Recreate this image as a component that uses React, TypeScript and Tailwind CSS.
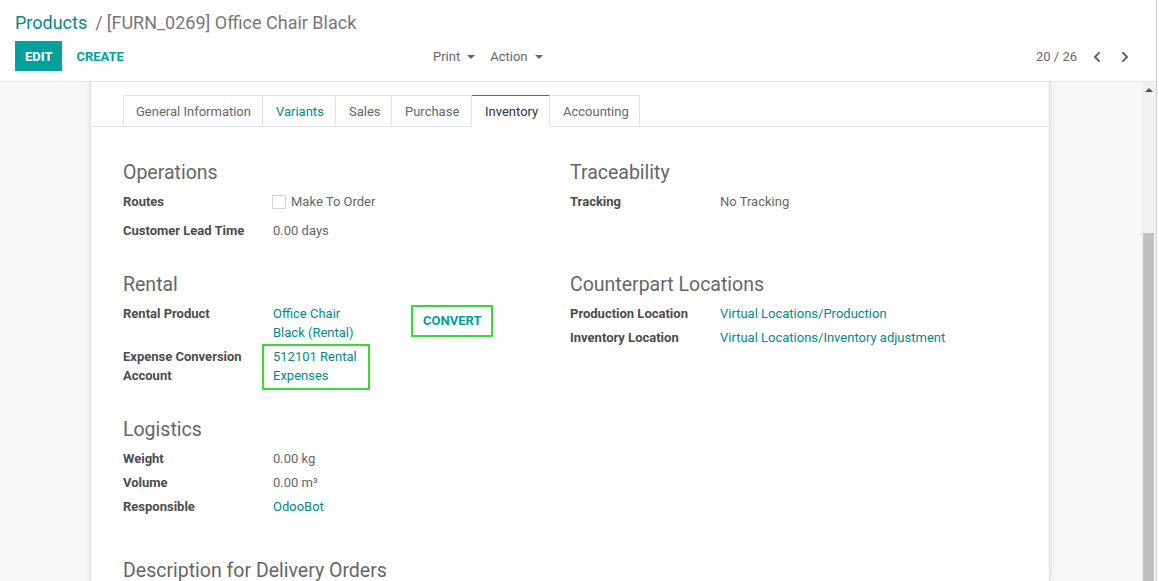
import React from "react";
import { FaChevronLeft, FaChevronRight } from "react-icons/fa";

const Caret = () => (
  <span className="inline-block ml-[7px] w-0 h-0 border-solid border-t-[4px] border-x-[4px] border-b-0 border-x-transparent border-t-[#666]" />
);

const Heading = ({ children, className = "" }: { children: React.ReactNode; className?: string }) => (
  <h2 className={`text-[19.5px] leading-[24px] pt-[1px] -mb-[1px] text-[#666] font-normal ${className}`}>{children}</h2>
);

const Row = ({ label, children, className = "" }: { label: React.ReactNode; children: React.ReactNode; className?: string }) => (
  <div className={`flex ${className}`}>
    <div className="w-[150px] shrink-0 font-bold text-[#4c4c4c] leading-[19px]">{label}</div>
    <div className="leading-[19px] text-[#666]">{children}</div>
  </div>
);

const tabs = [
  { name: "General Information", w: "w-[140px]" },
  { name: "Variants", w: "w-[73px]" },
  { name: "Sales", w: "w-[56px]" },
  { name: "Purchase", w: "w-[80px]" },
  { name: "Inventory", w: "w-[78px]" },
  { name: "Accounting", w: "w-[90px]" },
];

export default function App() {
  return (
    <div className="w-[1159px] h-[581px] overflow-hidden flex bg-white font-[Roboto,sans-serif] text-[13px]">
      <div className="w-[1156px] flex flex-col">
        {/* Header */}
        <div className="h-[82px] border-b border-[#dee2e6] bg-white shrink-0">
          <div className="pl-[15px] pt-[11px] flex items-center text-[18px] leading-[24px]">
            <span className="text-[#018a87]">Products</span>
            <span className="ml-[8px] text-[#777]">/</span>
            <span className="ml-[4px] text-[#777]">[FURN_0269] Office Chair Black</span>
          </div>
          <div className="mt-[6px] flex items-center h-[30px]">
            <div className="w-[433px] pl-[15px] flex items-center">
              <div className="h-[30px] px-[10px] pt-px bg-[#00A09D] text-white font-bold flex items-center">EDIT</div>
              <div className="ml-[4px] px-[10px] pt-px text-[#00A09D] font-bold">CREATE</div>
            </div>
            <div className="flex items-center pt-px text-[#666]">
              <span>Print</span>
              <Caret />
              <span className="ml-[15px]">Action</span>
              <Caret />
            </div>
            <div className="ml-auto pr-[25px] pt-px flex items-center text-[#666]">
              <span>20 / 26</span>
              <FaChevronLeft size={12} className="ml-[14px] text-[#5f5f5f]" />
              <FaChevronRight size={12} className="ml-[16px] text-[#5f5f5f]" />
            </div>
          </div>
        </div>

        {/* Body */}
        <div className="flex-1 flex min-h-0">
          <div className="w-[1141px] bg-[#f8f8f8] overflow-hidden">
            <div className="ml-[90px] w-[960px] h-full bg-white border-x border-[#dcdcdc] shadow-[0_0_8px_rgba(0,0,0,0.10)] px-[32px] pt-[13px]">
              {/* Tabs */}
              <div className="-mx-[32px] px-[32px] border-b border-[#dee2e6] flex h-[32px]">
                {tabs.map((t, i) => {
                  const active = t.name === "Inventory";
                  return (
                    <div
                      key={t.name}
                      className={`${t.w} h-[32px] -mb-px pt-px flex items-center border-y border-r ${i === 0 ? "border-l pl-[12px]" : "pl-[13px]"} ${
                        active
                          ? "border-t-[#7c5975] border-b-white border-r-[#dee2e6] bg-white text-[#333]"
                          : "border-[#dee2e6] bg-white " + (t.name === "Variants" ? "text-[#018a87]" : "text-[#666]")
                      }`}
                    >
                      {t.name}
                    </div>
                  );
                })}
              </div>

              {/* Content */}
              <div className="flex mt-[33px]">
                {/* Left column */}
                <div className="w-[447px]">
                  <Heading>Operations</Heading>
                  <Row label="Routes" className="pt-[8px] pb-[2px]">
                    <span className="flex items-center">
                      <span className="inline-block w-[14px] h-[14px] border border-[#d4d4d4] bg-white -ml-px" />
                      <span className="ml-[5px]">Make To Order</span>
                    </span>
                  </Row>
                  <Row label="Customer Lead Time" className="pt-[8px] pb-[2px]">
                    0.00 days
                  </Row>

                  <Heading className="mt-[30px]">Rental</Heading>
                  <div className="flex mt-[8px]">
                    <div className="w-[150px] shrink-0 font-bold text-[#4c4c4c] leading-[19px]">Rental Product</div>
                    <div className="w-[95px] leading-[19px] text-[#018a87]">Office Chair Black (Rental)</div>
                    <div className="ml-[43px] mt-[1px] h-[32px] border-2 border-[#36d936] px-[10px] pb-px flex items-center font-bold text-[#00A09D]">
                      CONVERT
                    </div>
                  </div>
                  <div className="flex mt-[2px]">
                    <div className="w-[150px] shrink-0 font-bold text-[#4c4c4c] leading-[19px] pt-[3px]">
                      Expense Conversion Account
                    </div>
                    <div className="-ml-[11px] w-[108px] border-2 border-[#36d936] pl-[9px] pt-[1px] pb-[3px] leading-[19px] text-[#018a87]">
                      512101 Rental Expenses
                    </div>
                  </div>

                  <Heading className="mt-[27px]">Logistics</Heading>
                  <div className="mt-[8px]">
                    <Row label="Weight" className="h-[24px]">0.00 kg</Row>
                    <Row label="Volume" className="h-[24px]">0.00 m³</Row>
                    <Row label="Responsible" className="h-[24px]">
                      <span className="text-[#018a87]">OdooBot</span>
                    </Row>
                  </div>

                  <Heading className="mt-[37px] whitespace-nowrap">Description for Delivery Orders</Heading>
                </div>

                {/* Right column */}
                <div className="flex-1">
                  <Heading>Traceability</Heading>
                  <Row label="Tracking" className="pt-[8px] pb-[2px]">No Tracking</Row>

                  <Heading className="mt-[59px]">Counterpart Locations</Heading>
                  <div className="mt-[8px]">
                    <Row label="Production Location" className="h-[24px]">
                      <span className="text-[#018a87]">Virtual Locations/Production</span>
                    </Row>
                    <Row label="Inventory Location" className="h-[24px]">
                      <span className="text-[#018a87]">Virtual Locations/Inventory adjustment</span>
                    </Row>
                  </div>
                </div>
              </div>
            </div>
          </div>

          {/* Scrollbar */}
          <div className="w-[15px] bg-[#f1f1f1] flex flex-col">
            <div className="mt-[6px] mx-auto w-0 h-0 border-solid border-b-[4px] border-x-[4px] border-t-0 border-x-transparent border-b-[#505050]" />
            <div className="mt-[141px] mx-[2px] flex-1 bg-[#c1c1c1]" />
          </div>
        </div>
      </div>
      <div className="w-px bg-[#cfcfcf]" />
      <div className="flex-1 bg-white" />
    </div>
  );
}
